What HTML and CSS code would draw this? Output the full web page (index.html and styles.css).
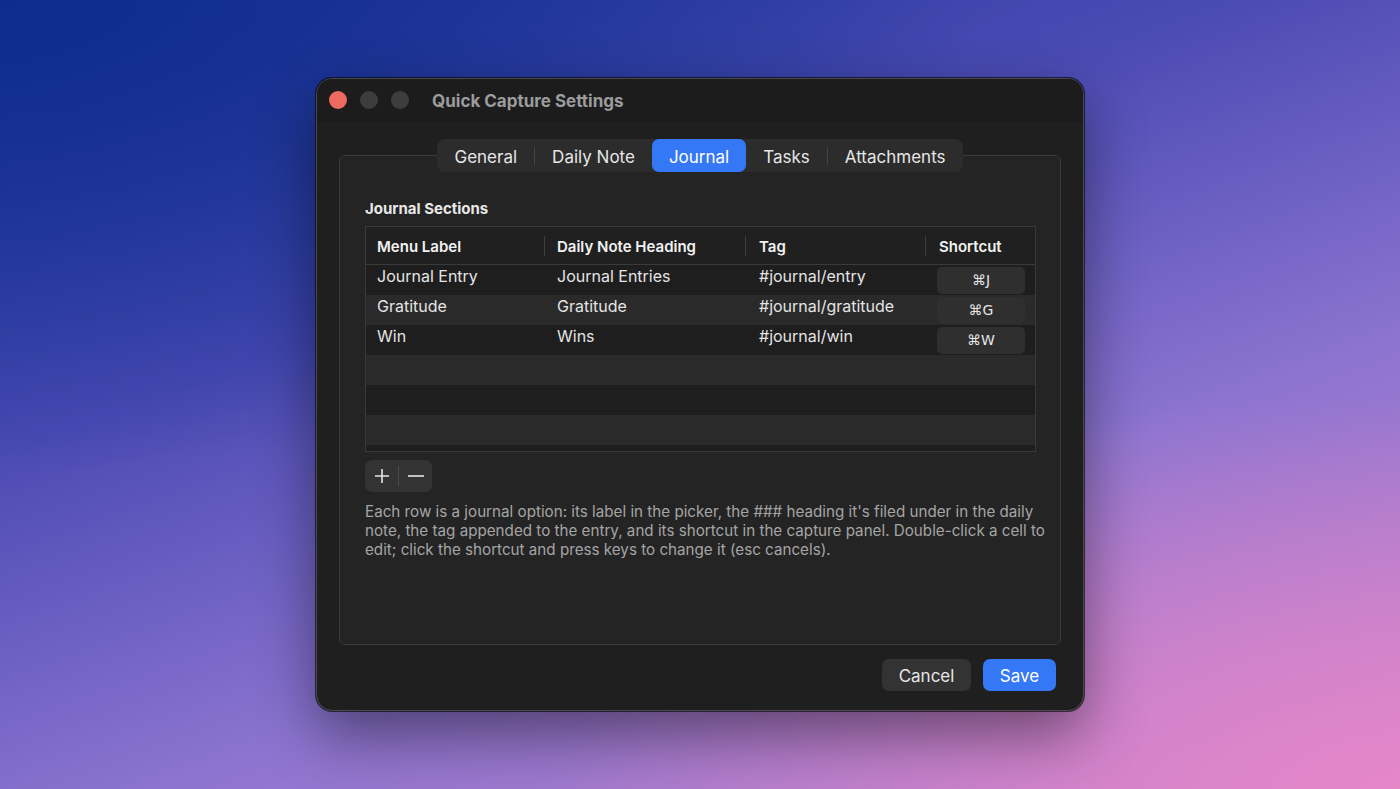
FILE: index.html
```
<!DOCTYPE html>
<html lang="en">
<head>
    <meta charset="UTF-8">
    <title>Quick Capture Settings</title>
    <link rel="stylesheet" href="styles.css">
</head>
<body>
    <div class="window">
        <div class="titlebar">
            <span class="light red"></span>
            <span class="light"></span>
            <span class="light"></span>
            <span class="title">Quick Capture Settings</span>
        </div>

        <div class="content">
            <div class="tabs">
                <span class="tab">General</span>
                <span class="sep"></span>
                <span class="tab">Daily Note</span>
                <span class="tab active">Journal</span>
                <span class="tab">Tasks</span>
                <span class="sep"></span>
                <span class="tab">Attachments</span>
            </div>

            <div class="group">
                <h2>Journal Sections</h2>

                <div class="table">
                    <div class="row head">
                        <div class="c1">Menu Label</div>
                        <div class="c2">Daily Note Heading</div>
                        <div class="c3">Tag</div>
                        <div class="c4">Shortcut</div>
                    </div>
                    <div class="row">
                        <div class="c1">Journal Entry</div>
                        <div class="c2">Journal Entries</div>
                        <div class="c3">#journal/entry</div>
                        <div class="c4"><span class="key">⌘J</span></div>
                    </div>
                    <div class="row alt">
                        <div class="c1">Gratitude</div>
                        <div class="c2">Gratitude</div>
                        <div class="c3">#journal/gratitude</div>
                        <div class="c4"><span class="key">⌘G</span></div>
                    </div>
                    <div class="row">
                        <div class="c1">Win</div>
                        <div class="c2">Wins</div>
                        <div class="c3">#journal/win</div>
                        <div class="c4"><span class="key">⌘W</span></div>
                    </div>
                    <div class="row alt"></div>
                    <div class="row"></div>
                    <div class="row alt"></div>
                    <div class="row"></div>
                </div>

                <div class="addremove">
                    <span class="btn-sym">
                        <svg width="14" height="14" viewBox="0 0 14 14"><path d="M7 0v14M0 7h14" stroke="#e6e6e6" stroke-width="1.6"/></svg>
                    </span>
                    <span class="sym-sep"></span>
                    <span class="btn-sym">
                        <svg width="16" height="14" viewBox="0 0 16 14"><path d="M0 7h16" stroke="#e6e6e6" stroke-width="1.6"/></svg>
                    </span>
                </div>

                <p class="help">Each row is a journal option: its label in the picker, the ### heading it's filed under in the daily note, the tag appended to the entry, and its shortcut in the capture panel. Double-click a cell to edit; click the shortcut and press keys to change it (esc cancels).</p>
            </div>

            <div class="actions">
                <button class="cancel">Cancel</button>
                <button class="save">Save</button>
            </div>
        </div>
    </div>
</body>
</html>
```

FILE: styles.css
```
html, body {
    height: 100%;
}
body {
    margin: 0;
    font-family: Inter, "Liberation Sans", sans-serif;
    background:
        radial-gradient(ellipse 60% 50% at 100% 100%, rgba(232, 134, 200, 0.9), rgba(232, 134, 200, 0) 100%),
        radial-gradient(ellipse 70% 60% at 0% 0%, rgba(14, 44, 140, 1), rgba(14, 44, 140, 0) 100%),
        linear-gradient(160deg, #1b3597 0%, #4b4bb4 35%, #8c74d0 65%, #c884cc 100%);
    display: flex;
    align-items: center;
    justify-content: center;
}
* {
    box-sizing: border-box;
}
.window {
    width: 768px;
    height: 633px;
    background: #1f1f1f;
    border: 1px solid #4a4a4a;
    border-radius: 16px;
    box-shadow: 0 0 0 1px rgba(0, 0, 0, 0.6), 0 24px 60px rgba(0, 0, 0, 0.45);
    display: flex;
    flex-direction: column;
    overflow: hidden;
}
.titlebar {
    height: 43px;
    flex: none;
    display: flex;
    align-items: center;
    padding-left: 12px;
    gap: 13px;
    background: #1c1c1c;
    border-bottom: 1px solid #191919;
}
.light {
    width: 18px;
    height: 18px;
    border-radius: 50%;
    background: #3d3d3d;
}
.light.red {
    background: #ee6a5f;
}
.title {
    margin-left: 10px;
    padding-top: 2px;
    font-size: 17px;
    font-weight: 700;
    color: #9c9c9c;
}
.content {
    flex: 1;
    display: flex;
    flex-direction: column;
    padding: 17px 22px 0 22px;
}
.tabs {
    align-self: center;
    position: relative;
    z-index: 1;
    display: flex;
    align-items: center;
    height: 33px;
    background: #2c2c2c;
    border-radius: 8px;
}
.tab {
    padding: 0 17px;
    height: 33px;
    line-height: 36px;
    font-size: 17px;
    color: #e6e6e6;
    border-radius: 7px;
}
.tab.active {
    background: #3478f6;
    color: #fff;
}
.sep {
    width: 1px;
    height: 18px;
    background: #444;
}
.group {
    margin-top: -17px;
    height: 490px;
    background: #242424;
    border: 1px solid #3b3b3b;
    border-radius: 6px;
    padding: 44px 24px 0 25px;
}
h2 {
    margin: 0;
    font-size: 15px;
    line-height: 18px;
    font-weight: 700;
    color: #e8e8e8;
}
.table {
    margin-top: 8px;
    height: 226px;
    border: 1px solid #393939;
    background: #1e1e1e;
    overflow: hidden;
}
.row {
    display: flex;
    height: 30px;
    font-size: 16px;
    color: #e4e4e4;
    background: #1e1e1e;
}
.row.alt {
    background: #2a2a2a;
}
.row > div {
    padding: 1px 0 0 11px;
    position: relative;
}
.c1 { width: 178px; }
.c2 { width: 201px; padding-left: 13px !important; }
.c3 { width: 180px; padding-left: 14px !important; }
.c4 { flex: 1; }
.row.head {
    height: 38px;
    background: #202020;
    border-bottom: 1px solid #3a3a3a;
    font-size: 15px;
    font-weight: 600;
    color: #f2f2f2;
}
.row.head > div {
    padding-top: 10px;
}
.row.head .c2::before,
.row.head .c3::before,
.row.head .c4::before {
    content: "";
    position: absolute;
    left: 0;
    top: 9px;
    width: 1px;
    height: 20px;
    background: #3e3e3e;
}
.row .c4 {
    padding: 2px 0 0 12px;
}
.row.head .c4 {
    padding: 10px 0 0 14px;
}
.key {
    display: block;
    width: 88px;
    height: 27px;
    line-height: 27px;
    text-align: center;
    background: #2f2f2f;
    border-radius: 5px;
    font-size: 14px;
    color: #e6e6e6;
    font-family: "DejaVu Sans", Inter, sans-serif;
}
.addremove {
    margin-top: 8px;
    width: 67px;
    height: 32px;
    background: #333;
    border-radius: 7px;
    display: flex;
    align-items: center;
}
.btn-sym {
    width: 33px;
    display: flex;
    justify-content: center;
}
.sym-sep {
    width: 1px;
    height: 20px;
    background: #4a4a4a;
}
.help {
    margin: 10px -20px 0 0;
    font-size: 15.2px;
    line-height: 19px;
    color: #a4a4a4;
}
.actions {
    margin-top: 14px;
    padding-right: 5px;
    display: flex;
    justify-content: flex-end;
    gap: 12px;
}
button {
    height: 32px;
    border: none;
    border-radius: 7px;
    font-family: Inter, "Liberation Sans", sans-serif;
    font-size: 17px;
    line-height: 34px;
    color: #e6e6e6;
    padding: 0;
}
.cancel {
    width: 89px;
    background: #333;
}
.save {
    width: 73px;
    background: #3478f6;
    color: #fff;
}
```
